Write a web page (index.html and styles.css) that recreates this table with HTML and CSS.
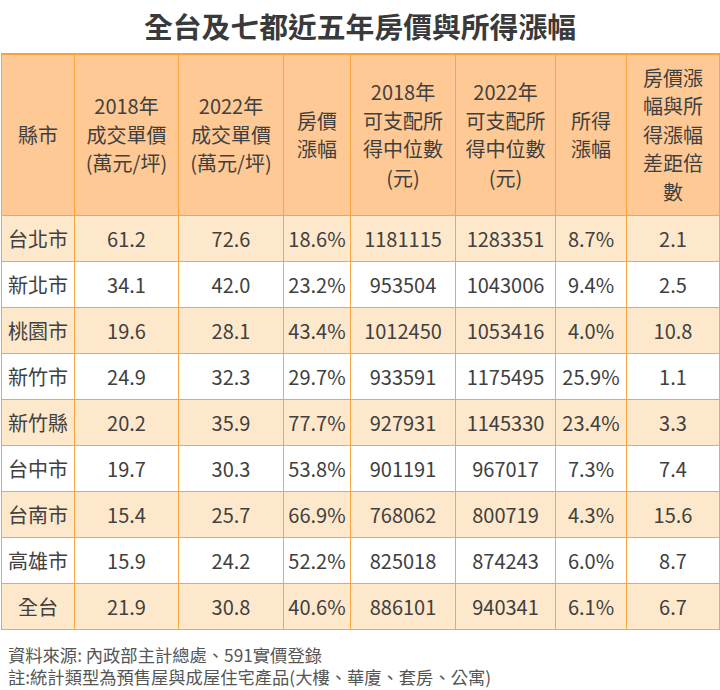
FILE: index.html
```html
<!DOCTYPE html>
<html lang="zh-Hant">
<head>
<meta charset="utf-8">
<link rel="stylesheet" href="styles.css">
</head>
<body>
<div class="page">
  <h1 class="title">全台及七都近五年房價與所得漲幅</h1>
  <table class="tbl">
    <colgroup>
      <col class="c1"><col class="c2"><col class="c3"><col class="c4"><col class="c5"><col class="c6"><col class="c7"><col class="c8">
    </colgroup>
    <thead>
      <tr>
        <th>縣市</th>
        <th>2018年<br>成交單價<br>(萬元/坪)</th>
        <th>2022年<br>成交單價<br>(萬元/坪)</th>
        <th>房價<br>漲幅</th>
        <th>2018年<br>可支配所<br>得中位數<br>(元)</th>
        <th>2022年<br>可支配所<br>得中位數<br>(元)</th>
        <th>所得<br>漲幅</th>
        <th>房價漲<br>幅與所<br>得漲幅<br>差距倍<br>數</th>
      </tr>
    </thead>
    <tbody>
      <tr class="odd"><td>台北市</td><td>61.2</td><td>72.6</td><td>18.6%</td><td>1181115</td><td>1283351</td><td>8.7%</td><td>2.1</td></tr>
      <tr><td>新北市</td><td>34.1</td><td>42.0</td><td>23.2%</td><td>953504</td><td>1043006</td><td>9.4%</td><td>2.5</td></tr>
      <tr class="odd"><td>桃園市</td><td>19.6</td><td>28.1</td><td>43.4%</td><td>1012450</td><td>1053416</td><td>4.0%</td><td>10.8</td></tr>
      <tr><td>新竹市</td><td>24.9</td><td>32.3</td><td>29.7%</td><td>933591</td><td>1175495</td><td>25.9%</td><td>1.1</td></tr>
      <tr class="odd"><td>新竹縣</td><td>20.2</td><td>35.9</td><td>77.7%</td><td>927931</td><td>1145330</td><td>23.4%</td><td>3.3</td></tr>
      <tr><td>台中市</td><td>19.7</td><td>30.3</td><td>53.8%</td><td>901191</td><td>967017</td><td>7.3%</td><td>7.4</td></tr>
      <tr class="odd"><td>台南市</td><td>15.4</td><td>25.7</td><td>66.9%</td><td>768062</td><td>800719</td><td>4.3%</td><td>15.6</td></tr>
      <tr><td>高雄市</td><td>15.9</td><td>24.2</td><td>52.2%</td><td>825018</td><td>874243</td><td>6.0%</td><td>8.7</td></tr>
      <tr class="odd"><td>全台</td><td>21.9</td><td>30.8</td><td>40.6%</td><td>886101</td><td>940341</td><td>6.1%</td><td>6.7</td></tr>
    </tbody>
  </table>
  <div class="notes">
    <p>資料來源: 內政部主計總處、591實價登錄</p>
    <p>註:統計類型為預售屋與成屋住宅產品(大樓、華廈、套房、公寓)</p>
  </div>
</div>
</body>
</html>
```

FILE: styles.css
```css
html, body {
  margin: 0;
  padding: 0;
  background: #ffffff;
}
body {
  font-family: "Noto Sans CJK TC", "Noto Sans", sans-serif;
  color: #404040;
}
.page {
  width: 720px;
}
.title {
  margin: 0;
  height: 53px;
  line-height: 52px;
  text-align: center;
  font-size: 28.8px;
  font-weight: 700;
  color: #3a3a3a;
  letter-spacing: 0;
}
.tbl {
  margin-left: 1px;
  width: 718px;
  table-layout: fixed;
  border-collapse: collapse;
  font-size: 20px;
}
.c1 { width: 73px; }
.c2 { width: 104px; }
.c3 { width: 105px; }
.c4 { width: 67px; }
.c5 { width: 105px; }
.c6 { width: 100px; }
.c7 { width: 71px; }
.c8 { width: 93px; }
.tbl th, .tbl td {
  border: 1px solid #f8a640;
  text-align: center;
  padding: 0;
  color: #404040;
}
.tbl th {
  background: #fec994;
  font-weight: 400;
  line-height: 28.5px;
  height: 160px;
  border-top: 2px solid #f8a23a;
}
.tbl td {
  height: 45px;
  line-height: 45px;
  background: #ffffff;
}
.tbl tr.odd td {
  background: #fee8cc;
}
.notes {
  margin-top: 14px;
  padding-left: 8px;
  font-size: 17.3px;
  line-height: 22px;
  color: #555555;
}
.notes p {
  margin: 0;
}
```
